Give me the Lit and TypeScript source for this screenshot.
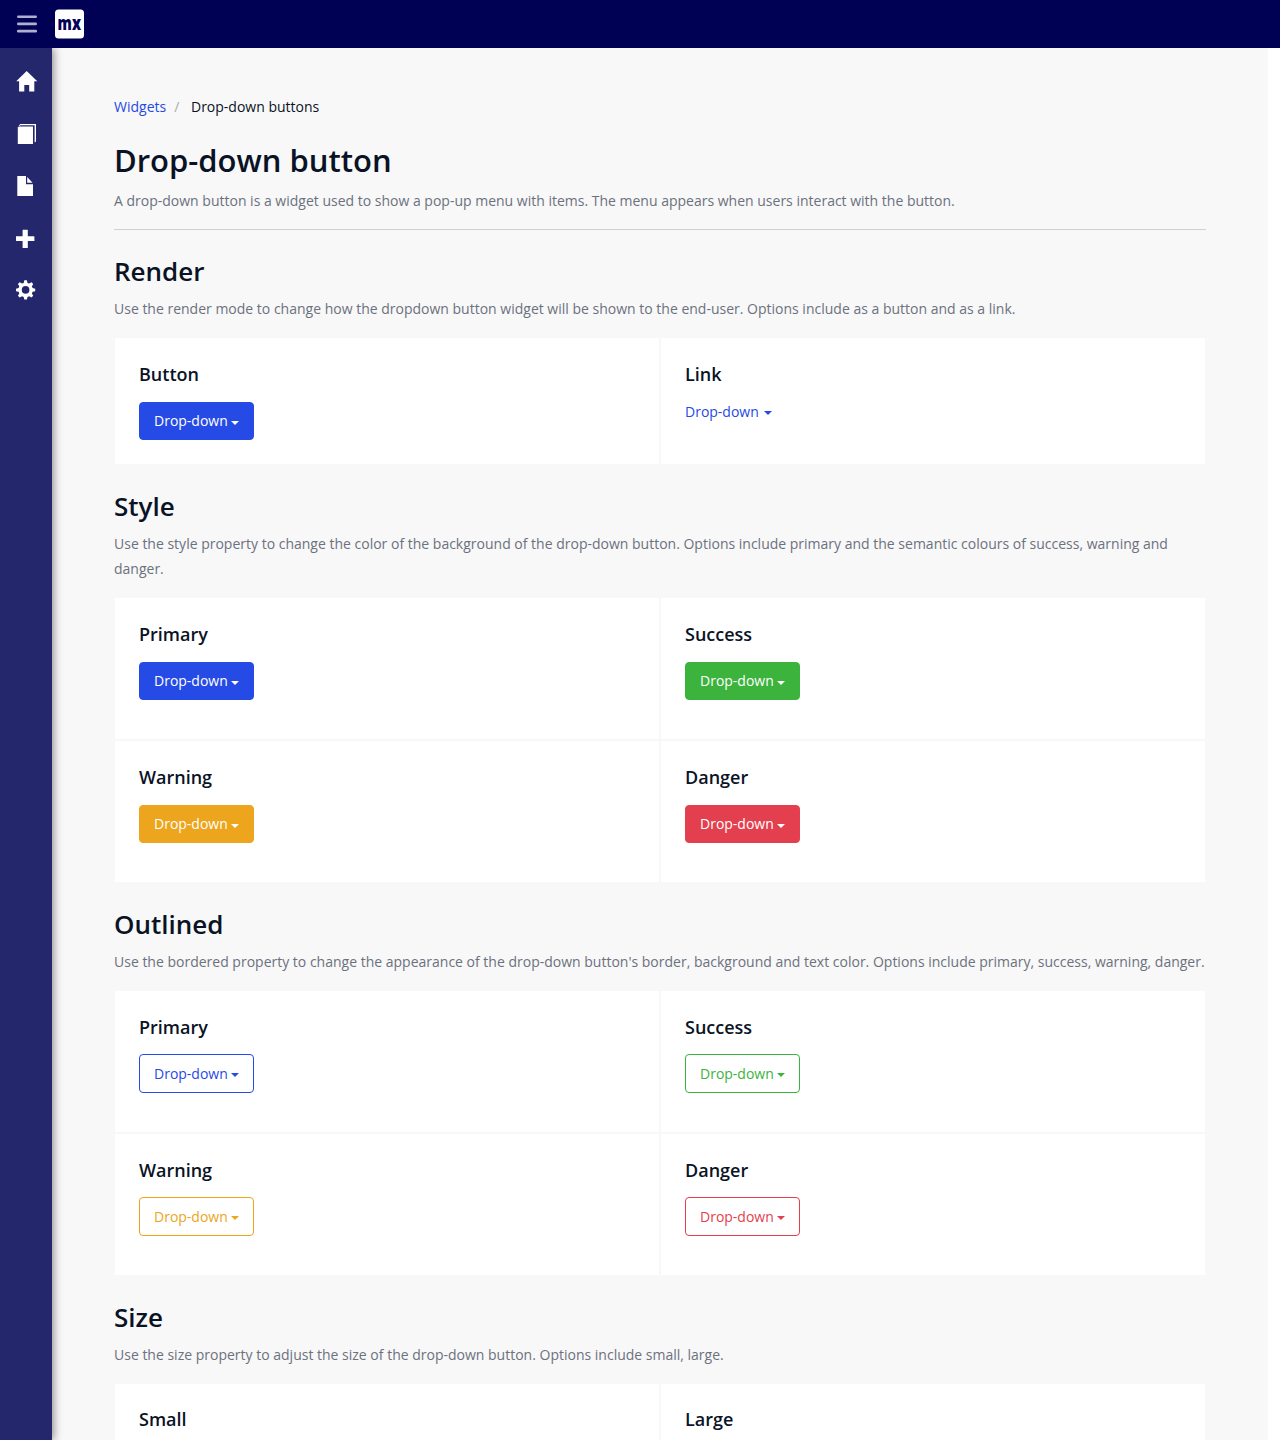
import { LitElement, html, css, svg } from "lit";
import { customElement, property } from "lit/decorators.js";

type Tone = "primary" | "success" | "warning" | "danger";
type Mode = "solid" | "outline" | "link";

interface Example {
  title: string;
  tone: Tone;
  mode: Mode;
}

interface Section {
  title: string;
  text: string;
  size: "compact" | "regular";
  items: Example[];
}

const tones = (mode: Mode): Example[] => [
  { title: "Primary", tone: "primary", mode },
  { title: "Success", tone: "success", mode },
  { title: "Warning", tone: "warning", mode },
  { title: "Danger", tone: "danger", mode },
];

const SECTIONS: Section[] = [
  {
    title: "Render",
    text: "Use the render mode to change how the dropdown button widget will be shown to the end-user. Options include as a button and as a link.",
    size: "compact",
    items: [
      { title: "Button", tone: "primary", mode: "solid" },
      { title: "Link", tone: "primary", mode: "link" },
    ],
  },
  {
    title: "Style",
    text: "Use the style property to change the color of the background of the drop-down button. Options include primary and the semantic colours of success, warning and danger.",
    size: "regular",
    items: tones("solid"),
  },
  {
    title: "Outlined",
    text: "Use the bordered property to change the appearance of the drop-down button's border, background and text color. Options include primary, success, warning, danger.",
    size: "regular",
    items: tones("outline"),
  },
  {
    title: "Size",
    text: "Use the size property to adjust the size of the drop-down button. Options include small, large.",
    size: "regular",
    items: [
      { title: "Small", tone: "primary", mode: "solid" },
      { title: "Large", tone: "primary", mode: "solid" },
    ],
  },
];

const NAV = [
  // home
  svg`<path d="M10.7 1 L21.3 11.3 H18.3 V21.6 H13.2 V15 H8.3 V21.6 H3.1 V11.3 H0.2 Z"/>`,
  // stacked pages
  svg`<path d="M1.8 5.4 L2.8 4.4 H17 V22 H1.8 Z"/><path d="M2.8 3.6 L4.4 2 H20 V19.6 L18.6 20.4 V3.3 H4.6 L3.4 4 Z"/>`,
  // document
  svg`<path d="M1.3 2 H10 V10.2 H17 V22 H1.3 Z"/><path d="M11.2 3 L16.6 8.7 H11.2 Z"/>`,
  // plus
  svg`<path d="M7 3.7 H11.4 Q11.8 3.7 11.8 4.2 V10.2 H17.8 Q18.4 10.2 18.4 10.7 V15 H11.8 V21.5 Q11.8 22 11.3 22 H6.6 V15 H0.5 Q0 15 0 14.5 V10.2 H6.6 V4.2 Q6.6 3.7 7 3.7 Z"/>`,
  // cog
  svg`<path transform="translate(0 0.3)" fill-rule="evenodd" d="M8.3 2 H10.9 L11.5 4.6 L13.2 5.3 L15.5 3.9 L17.2 5.7 L15.9 8 L16.6 9.8 L19.2 10.4 V12.9 L16.6 13.5 L15.9 15.2 L17.2 17.5 L15.5 19.3 L13.2 17.9 L11.5 18.7 L10.9 21.3 H8.3 L7.7 18.7 L6 17.9 L3.7 19.3 L1.9 17.5 L3.3 15.2 L2.6 13.5 L0 12.9 V10.4 L2.6 9.8 L3.3 8 L1.9 5.7 L3.7 3.9 L6 5.3 L7.7 4.6 Z M9.6 7.8 A3.8 3.8 0 1 0 9.6 15.4 A3.8 3.8 0 1 0 9.6 7.8 Z"/>`,
];

@customElement("drop-button")
class DropButton extends LitElement {
  @property() tone: Tone = "primary";
  @property() mode: Mode = "solid";

  static styles = css`
    :host {
      display: flex;
    }
    .btn {
      display: flex;
      align-items: center;
      box-sizing: border-box;
      height: 38.4px;
      padding: 0 14px;
      border: 1px solid var(--tone);
      border-radius: 4px;
      background: var(--tone);
      color: #fff;
      font: 14px/20px "Open Sans", sans-serif;
      cursor: pointer;
    }
    .primary {
      --tone: #264ae5;
    }
    .success {
      --tone: #3cb33d;
    }
    .warning {
      --tone: #eca51c;
    }
    .danger {
      --tone: #e33f4e;
    }
    .outline {
      height: 38.7px;
      margin-top: -0.3px;
      background: transparent;
      color: var(--tone);
    }
    .link {
      height: 20px;
      padding: 0;
      border: 0;
      background: transparent;
      color: var(--tone);
    }
    .caret {
      margin: 3.6px 0 0 3px;
      border-top: 4px solid currentColor;
      border-left: 4px solid transparent;
      border-right: 4px solid transparent;
    }
    .outline .caret {
      margin-top: 2.6px;
    }
    .link .caret {
      margin: 2px 0 0 5px;
    }
  `;

  render() {
    return html`<button class="btn ${this.tone} ${this.mode}">
      Drop-down<span class="caret"></span>
    </button>`;
  }
}

@customElement("app-root")
class AppRoot extends LitElement {
  static styles = css`
    :host {
      display: flex;
      flex-direction: column;
      height: 1440px;
      overflow: hidden;
      background: #fff;
      color: #0a1325;
      font: 14px/24.5px "Open Sans", sans-serif;
    }
    .topbar {
      display: flex;
      align-items: center;
      flex: none;
      height: 48px;
      padding-left: 17px;
      background: #000055;
    }
    .burger {
      display: block;
      width: 20px;
      height: 18px;
      margin-right: 18px;
      fill: #b0b0cc;
    }
    .logo {
      display: block;
      width: 29px;
      height: 30px;
    }
    .logo text {
      font: 800 20px "Open Sans", sans-serif;
      fill: #000055;
    }
    .body {
      display: flex;
      flex: 1;
      min-height: 0;
    }
    .sidebar {
      flex: none;
      width: 52px;
      box-sizing: border-box;
      padding: 22px 0 0 16px;
      background: #24276c;
      box-shadow: 2px 0 8px rgba(0, 0, 0, 0.42);
      clip-path: inset(0 -20px 0 0);
      z-index: 1;
    }
    .nav {
      display: block;
      width: 24px;
      height: 24px;
      margin-bottom: 28px;
      fill: #fff;
    }
    .main {
      flex: 1;
      margin-right: 12px;
      padding: 46.67px 62px 0;
      overflow: hidden;
      background: #f8f8f8;
    }
    .crumbs {
      display: flex;
    }
    .crumbs a {
      color: #264ae5;
    }
    .slash {
      margin: 0 11.7px 0 8px;
      color: #a9acb3;
    }
    h1,
    h2,
    h4,
    p {
      margin: 0;
      font-weight: 600;
    }
    h1 {
      margin: 20.8px 0 8.7px;
      font-size: 31px;
      line-height: 40px;
    }
    p {
      color: #6c717e;
      font-weight: 400;
      line-height: 24.75px;
    }
    .intro {
      padding-bottom: 16px;
      border-bottom: 1px solid #ced0d3;
    }
    h2 {
      padding-top: 24.8px;
      margin-bottom: 8.2px;
      font-size: 26px;
      line-height: 33.8px;
    }
    .grid {
      display: grid;
      grid-template-columns: 1fr 1fr;
      margin-top: 15.49px;
    }
    section:last-child .grid {
      margin-top: 15px;
    }
    .cell {
      box-sizing: border-box;
      height: 143px;
      padding: 24px;
      border: 1px solid #f8f8f8;
      background: #fff;
    }
    .compact .cell {
      height: 128px;
    }
    h4 {
      padding-top: 0.6px;
      margin-bottom: 15.4px;
      font-size: 18px;
      line-height: 23.4px;
    }
  `;

  render() {
    return html`
      <header class="topbar">
        <svg class="burger" viewBox="0 0 20 18">
          <rect y="0.4" width="20" height="2.7" rx="1.3" />
          <rect y="7.6" width="20" height="2.7" rx="1.3" />
          <rect y="14.8" width="20" height="2.7" rx="1.3" />
        </svg>
        <svg class="logo" viewBox="0 0 29 30">
          <rect y="0.5" width="29" height="29" rx="3.5" fill="#fff" />
          <text x="2.6" y="20.9" textLength="23.4" lengthAdjust="spacingAndGlyphs">mx</text>
        </svg>
      </header>
      <div class="body">
        <nav class="sidebar">
          ${NAV.map((icon) => html`<svg class="nav" viewBox="0 0 24 24">${icon}</svg>`)}
        </nav>
        <main class="main">
          <div class="crumbs">
            <a>Widgets</a><span class="slash">/</span><span>Drop-down buttons</span>
          </div>
          <h1>Drop-down button</h1>
          <p class="intro">
            A drop-down button is a widget used to show a pop-up menu with items. The menu appears when users interact with the button.
          </p>
          ${SECTIONS.map(
            (s) => html`<section class=${s.size}>
              <h2>${s.title}</h2>
              <p>${s.text}</p>
              <div class="grid">
                ${s.items.map(
                  (i) => html`<div class="cell">
                    <h4>${i.title}</h4>
                    <drop-button .tone=${i.tone} .mode=${i.mode}></drop-button>
                  </div>`
                )}
              </div>
            </section>`
          )}
        </main>
      </div>
    `;
  }
}
